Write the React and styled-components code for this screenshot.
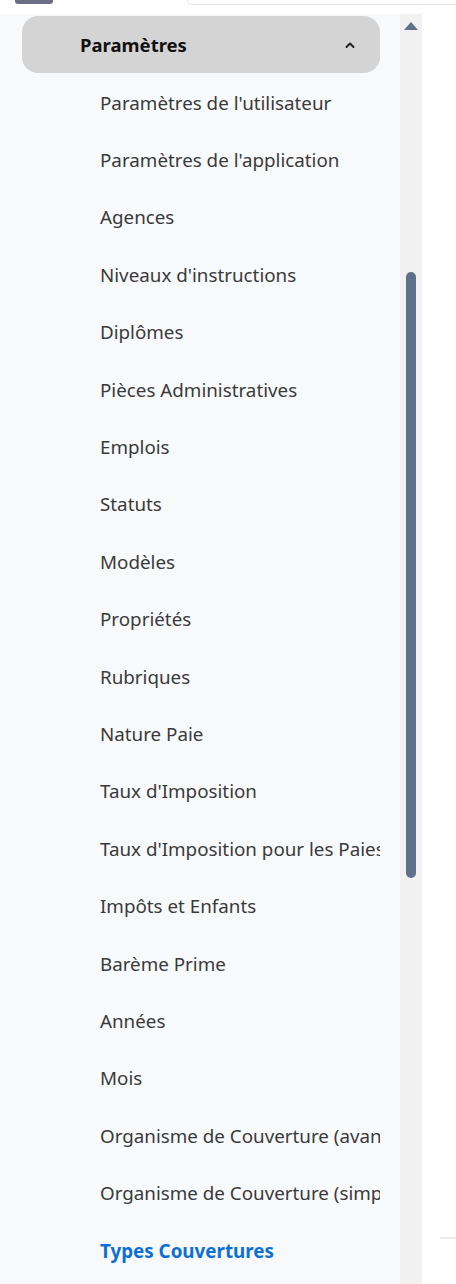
import React from "react";
import styled, { createGlobalStyle } from "styled-components";

const Global = createGlobalStyle`
  html, body { margin: 0; padding: 0; background: #ffffff; }
  body { font-family: "Noto Sans", "Open Sans", sans-serif; width: 456px; height: 1284px; overflow: hidden; }
`;

const Page = styled.div`
  width: 456px;
  height: 1284px;
  display: flex;
  flex-direction: column;
  background: #ffffff;
`;

const TopBar = styled.div`
  height: 14px;
  display: flex;
  align-items: flex-start;
  flex-shrink: 0;
`;

const Tab = styled.div`
  margin-left: 15px;
  width: 38px;
  height: 4px;
  background: #6b6e86;
  border-radius: 0 0 3px 3px;
`;

const SearchEdge = styled.div`
  margin-left: 134px;
  flex: 1;
  height: 4px;
  border: 1px solid #e4e4e4;
  border-top: none;
  border-right: none;
  border-radius: 0 0 0 8px;
`;

const Body = styled.div`
  flex: 1;
  display: flex;
  min-height: 0;
`;

const Sidebar = styled.nav`
  width: 400px;
  background: #f8f9fb;
  overflow: hidden;
  padding-top: 2px;
  box-sizing: border-box;
`;

const GroupHeader = styled.div`
  margin-left: 22px;
  width: 358px;
  height: 57px;
  border-radius: 16px;
  background: #d4d4d4;
  display: flex;
  align-items: center;
  justify-content: space-between;
  padding: 0 24px 0 58px;
  box-sizing: border-box;
  font-weight: 700;
  font-size: 18.5px;
  color: #111111;
`;

const Chevron = styled.svg`
  width: 12px;
  height: 12px;
`;

const List = styled.ul`
  list-style: none;
  margin: 0;
  padding: 0;
  width: 380px;
  overflow: hidden;
`;

const Item = styled.li`
  height: 57.4px;
  display: flex;
  align-items: center;
  padding-left: 100px;
  white-space: nowrap;
  overflow: hidden;
  font-size: 18.8px;
  font-weight: ${(p) => (p.$active ? 700 : 400)};
  color: ${(p) => (p.$active ? "#0b6fd3" : "#3a3a3a")};
  &:first-child { margin-top: 1px; }
`;

const Track = styled.div`
  width: 22px;
  background: #f1f1f1;
  display: flex;
  flex-direction: column;
  align-items: center;
  flex-shrink: 0;
`;

const Arrow = styled.div`
  margin-top: 8px;
  width: 0;
  height: 0;
  border-left: 7px solid transparent;
  border-right: 7px solid transparent;
  border-bottom: 8px solid #5f708a;
`;

const Thumb = styled.div`
  margin-top: 242px;
  width: 10px;
  height: 606px;
  border-radius: 5px;
  background: #5f708a;
`;

const Right = styled.div`
  flex: 1;
  display: flex;
  flex-direction: column;
  justify-content: flex-end;
  padding-bottom: 45px;
`;

const Divider = styled.div`
  margin-left: 18px;
  height: 2px;
  background: #ececec;
`;

const items = [
  "Paramètres de l'utilisateur",
  "Paramètres de l'application",
  "Agences",
  "Niveaux d'instructions",
  "Diplômes",
  "Pièces Administratives",
  "Emplois",
  "Statuts",
  "Modèles",
  "Propriétés",
  "Rubriques",
  "Nature Paie",
  "Taux d'Imposition",
  "Taux d'Imposition pour les Paies",
  "Impôts et Enfants",
  "Barème Prime",
  "Années",
  "Mois",
  "Organisme de Couverture (avantages)",
  "Organisme de Couverture (simple)",
  "Types Couvertures",
];

export default function App() {
  return (
    <>
      <Global />
      <Page>
        <TopBar>
          <Tab />
          <SearchEdge />
        </TopBar>
        <Body>
          <Sidebar>
            <GroupHeader>
              <span>Paramètres</span>
              <Chevron viewBox="0 0 12 12">
                <path d="M2.5 8 L6 4.5 L9.5 8" fill="none" stroke="#222" strokeWidth="2" strokeLinecap="round" strokeLinejoin="round" />
              </Chevron>
            </GroupHeader>
            <List>
              {items.map((t, i) => (
                <Item key={t} $active={i === items.length - 1}>{t}</Item>
              ))}
            </List>
          </Sidebar>
          <Track>
            <Arrow />
            <Thumb />
          </Track>
          <Right>
            <Divider />
          </Right>
        </Body>
      </Page>
    </>
  );
}
